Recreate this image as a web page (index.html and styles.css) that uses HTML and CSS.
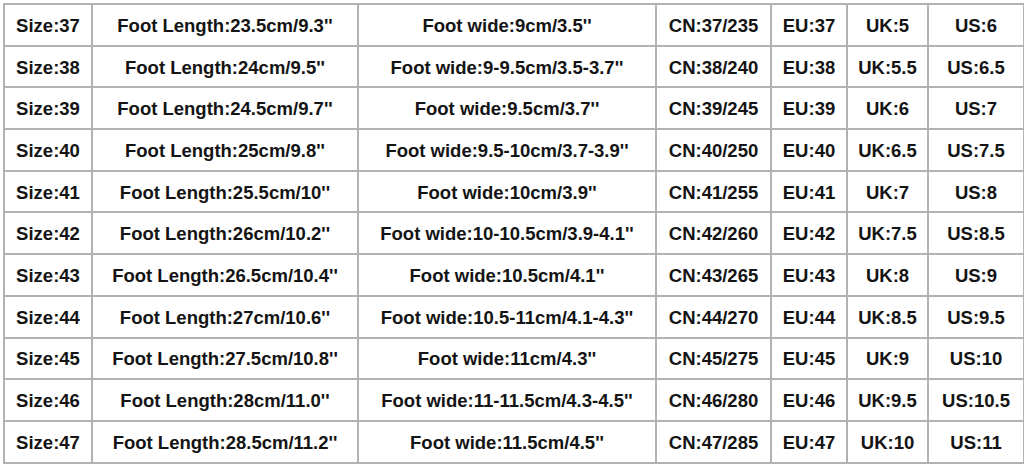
FILE: index.html
```html
<!DOCTYPE html>
<html>
<head>
<meta charset="utf-8">
<link rel="stylesheet" href="styles.css">
</head>
<body>
<table class="size-table">
<colgroup>
<col class="c1"><col class="c2"><col class="c3"><col class="c4"><col class="c5"><col class="c6"><col class="c7">
</colgroup>
<tbody>
<tr><td>Size:37</td><td>Foot Length:23.5cm/9.3''</td><td>Foot wide:9cm/3.5''</td><td>CN:37/235</td><td>EU:37</td><td>UK:5</td><td>US:6</td></tr>
<tr><td>Size:38</td><td>Foot Length:24cm/9.5''</td><td>Foot wide:9-9.5cm/3.5-3.7''</td><td>CN:38/240</td><td>EU:38</td><td>UK:5.5</td><td>US:6.5</td></tr>
<tr><td>Size:39</td><td>Foot Length:24.5cm/9.7''</td><td>Foot wide:9.5cm/3.7''</td><td>CN:39/245</td><td>EU:39</td><td>UK:6</td><td>US:7</td></tr>
<tr><td>Size:40</td><td>Foot Length:25cm/9.8''</td><td>Foot wide:9.5-10cm/3.7-3.9''</td><td>CN:40/250</td><td>EU:40</td><td>UK:6.5</td><td>US:7.5</td></tr>
<tr><td>Size:41</td><td>Foot Length:25.5cm/10''</td><td>Foot wide:10cm/3.9''</td><td>CN:41/255</td><td>EU:41</td><td>UK:7</td><td>US:8</td></tr>
<tr><td>Size:42</td><td>Foot Length:26cm/10.2''</td><td>Foot wide:10-10.5cm/3.9-4.1''</td><td>CN:42/260</td><td>EU:42</td><td>UK:7.5</td><td>US:8.5</td></tr>
<tr><td>Size:43</td><td>Foot Length:26.5cm/10.4''</td><td>Foot wide:10.5cm/4.1''</td><td>CN:43/265</td><td>EU:43</td><td>UK:8</td><td>US:9</td></tr>
<tr><td>Size:44</td><td>Foot Length:27cm/10.6''</td><td>Foot wide:10.5-11cm/4.1-4.3''</td><td>CN:44/270</td><td>EU:44</td><td>UK:8.5</td><td>US:9.5</td></tr>
<tr><td>Size:45</td><td>Foot Length:27.5cm/10.8''</td><td>Foot wide:11cm/4.3''</td><td>CN:45/275</td><td>EU:45</td><td>UK:9</td><td>US:10</td></tr>
<tr><td>Size:46</td><td>Foot Length:28cm/11.0''</td><td>Foot wide:11-11.5cm/4.3-4.5''</td><td>CN:46/280</td><td>EU:46</td><td>UK:9.5</td><td>US:10.5</td></tr>
<tr><td>Size:47</td><td>Foot Length:28.5cm/11.2''</td><td>Foot wide:11.5cm/4.5''</td><td>CN:47/285</td><td>EU:47</td><td>UK:10</td><td>US:11</td></tr>
</tbody>
</table>
</body>
</html>
```
FILE: styles.css
```css
html, body {
  margin: 0;
  padding: 0;
  background: #ffffff;
}
body {
  padding: 3px 0 0 3px;
  font-family: "Liberation Sans", Arial, sans-serif;
}
.size-table {
  border-collapse: collapse;
  table-layout: fixed;
  width: 1020px;
}
.c1 { width: 88px; }
.c2 { width: 266px; }
.c3 { width: 298px; }
.c4 { width: 115px; }
.c5 { width: 76px; }
.c6 { width: 81px; }
.c7 { width: 96px; }
.size-table td {
  border: 2px solid #b2b2b2;
  height: 41.7px;
  padding: 2px 0 0 0;
  box-sizing: border-box;
  text-align: center;
  vertical-align: middle;
  font-weight: bold;
  font-size: 18.5px;
  color: #141414;
  white-space: nowrap;
}
```
